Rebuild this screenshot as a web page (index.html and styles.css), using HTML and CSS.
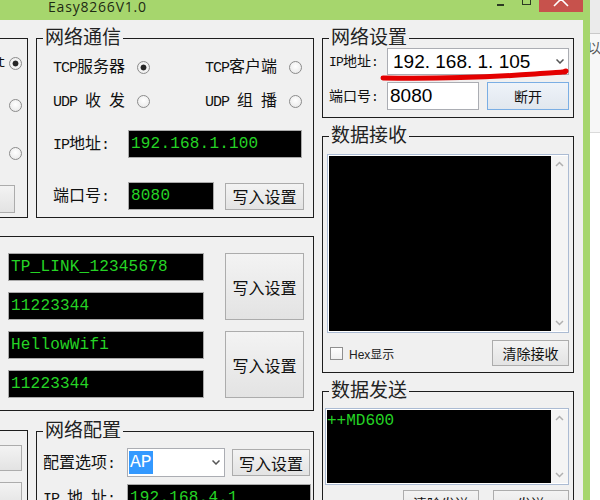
FILE: index.html
```html
<!DOCTYPE html>
<html lang="zh-CN">
<head>
<meta charset="utf-8">
<title>Easy8266V1.0</title>
<link rel="stylesheet" href="styles.css">
</head>
<body>
<div class="desktop">
  <div class="window">
    <div class="titlebar">
      <span class="title">Easy8266V1.0</span>
      <div class="caps">
        <span class="cap-min"></span>
        <span class="cap-max"></span>
        <span class="cap-close"><svg width="44" height="12" viewBox="0 0 44 12"><path d="M15 -8 L29 6 M29 -8 L15 6" stroke="#fff" stroke-width="1.6" fill="none"/></svg></span>
      </div>
    </div>
    <div class="client">
      <div class="col-left">
        <div class="row row1">
          <div class="partial p1">
            <div class="p-opt o1"><span class="en">Smart</span><input type="radio" class="radio" name="m" checked></div>
            <div class="p-opt o2"><input type="radio" class="radio" name="m"></div>
            <div class="p-opt o3"><input type="radio" class="radio" name="m"></div>
            <button class="btn p1btn"></button>
          </div>
          <fieldset class="group net-comm">
            <legend>网络通信</legend>
            <div class="gbody">
              <div class="radios">
                <label class="ropt"><span><span class="en">TCP</span>服务器</span><input type="radio" class="radio" name="p" checked></label>
                <label class="ropt"><span><span class="en">TCP</span>客户端</span><input type="radio" class="radio" name="p"></label>
                <label class="ropt"><span><span class="en">UDP </span>收<span class="en"> </span>发</span><input type="radio" class="radio" name="p"></label>
                <label class="ropt"><span><span class="en">UDP </span>组<span class="en"> </span>播</span><input type="radio" class="radio" name="p"></label>
              </div>
              <div class="frow ip-row"><span class="lbl"><span class="en">IP</span>地址<span class="en">:</span></span><div class="lcd ip-lcd">192.168.1.100</div></div>
              <div class="frow port-row"><span class="lbl">端口号<span class="en">:</span></span><div class="lcd port-lcd">8080</div><button class="btn wbtn">写入设置</button></div>
            </div>
          </fieldset>
        </div>

        <div class="wifi">
          <div class="lcd">TP_LINK_12345678</div>
          <button class="btn tall">写入设置</button>
          <div class="lcd">11223344</div>
          <div class="lcd">HellowWifi</div>
          <button class="btn tall">写入设置</button>
          <div class="lcd">11223344</div>
        </div>

        <div class="row row3">
          <div class="partial p3">
            <button class="btn pbtn"></button>
            <button class="btn pbtn"></button>
          </div>
          <fieldset class="group net-cfg">
            <legend>网络配置</legend>
            <div class="gbody">
              <div class="frow"><span class="lbl2">配置选项<span class="en">:</span></span><div class="select"><span class="sel-hl">AP</span><svg width="8" height="5" viewBox="0 0 8 5"><polyline points="0.5,0.5 4,4 7.5,0.5" fill="none" stroke="#555" stroke-width="1.5"/></svg></div><button class="btn wbtn2">写入设置</button></div>
              <div class="frow cfg-ip"><span class="lbl2"><span class="en">IP </span>地<span class="en"> </span>址<span class="en">:</span></span><div class="lcd cfg-lcd">192.168.4.1</div></div>
            </div>
          </fieldset>
        </div>
      </div>

      <div class="col-right">
        <fieldset class="group netset">
          <legend>网络设置</legend>
          <div class="gbody ns-body">
            <div class="nrow"><span class="lbl3"><span class="en3">IP</span>地址<span class="en3">:</span></span><div class="combo"><span>192. 168. 1. 105</span><svg width="8" height="5" viewBox="0 0 8 5"><polyline points="0.5,0.5 4,4 7.5,0.5" fill="none" stroke="#555" stroke-width="1.5"/></svg></div></div>
            <div class="nrow r2"><span class="lbl3">端口号<span class="en3">:</span></span><div class="tbox">8080</div><button class="btn btn14 focus">断开</button></div>
          </div>
        </fieldset>

        <fieldset class="group recv">
          <legend>数据接收</legend>
          <div class="gbody rv-body">
            <div class="ta rv-ta">
              <div class="ta-black"></div>
              <div class="ta-scroll">
                <svg width="17" height="17" viewBox="0 0 17 17"><polyline points="5,10 8.5,6.5 12,10" fill="none" stroke="#b0b0b0" stroke-width="1.5"/></svg>
                <svg width="17" height="17" viewBox="0 0 17 17"><polyline points="5,7 8.5,10.5 12,7" fill="none" stroke="#b0b0b0" stroke-width="1.5"/></svg>
              </div>
            </div>
            <div class="rv-bottom">
              <label class="chk"><input type="checkbox" class="cbox"><span class="hex">Hex显示</span></label>
              <button class="btn btn14 clr">清除接收</button>
            </div>
          </div>
        </fieldset>

        <fieldset class="group send">
          <legend>数据发送</legend>
          <div class="gbody sd-body">
            <div class="ta sd-ta">
              <div class="ta-black"><span class="sendtxt">++MD600</span></div>
              <div class="ta-scroll">
                <svg width="17" height="17" viewBox="0 0 17 17"><polyline points="5,10 8.5,6.5 12,10" fill="none" stroke="#b0b0b0" stroke-width="1.5"/></svg>
                <svg width="17" height="17" viewBox="0 0 17 17"><polyline points="5,7 8.5,10.5 12,7" fill="none" stroke="#b0b0b0" stroke-width="1.5"/></svg>
              </div>
            </div>
            <div class="sd-bottom">
              <button class="btn btn14 sb">清除发送</button>
              <button class="btn btn14 sb">发送</button>
            </div>
          </div>
        </fieldset>
      </div>
    </div>
  </div>
  <div class="bgwin"><span class="bgtxt">以</span></div>
  <svg class="redmark" width="600" height="500" viewBox="0 0 600 500"><path d="M383 78 C 430 79, 490 77, 535 74 S 560 72, 566 71" fill="none" stroke="#e40000" stroke-width="5" stroke-linecap="round"/></svg>
</div>
</body>
</html>
```

FILE: styles.css
```css
* { box-sizing: border-box; }
html, body { margin: 0; padding: 0; }
body {
  width: 600px;
  height: 500px;
  overflow: hidden;
  position: relative;
  background: #fff;
  font-family: "Noto Sans CJK SC", "Noto Sans", sans-serif;
  color: #111;
}
.desktop { display: flex; height: 500px; }

.window {
  width: 590px;
  flex: none;
  display: flex;
  flex-direction: column;
  background: #a6d66d;
}
.titlebar {
  height: 20px;
  flex: none;
  display: flex;
  align-items: flex-start;
  overflow: hidden;
}
.title {
  margin: -3px 0 0 48px;
  font-family: "Open Sans", sans-serif;
  font-size: 14px;
  line-height: 19px;
  letter-spacing: 0.8px;
  color: #1e2a14;
}
.caps { margin: 0 7px 0 auto; display: flex; align-items: flex-start; }
.cap-min { width: 7px; height: 2px; margin-top: 4px; background: #2c3a22; }
.cap-max { width: 9px; height: 9px; margin: -4px 0 0 18px; border: 1px solid #2c3a22; }
.cap-close { width: 44px; height: 12px; margin-left: 8px; background: #c7524c; display: block; }
.cap-close svg { display: block; }

.client {
  flex: 1;
  margin-right: 7px;
  background: #f0f0f0;
  display: flex;
  align-items: flex-start;
  gap: 8px;
  padding-top: 6px;
  overflow: hidden;
}

/* generic */
.en { font-family: "Liberation Mono", monospace; font-size: 15px; letter-spacing: -1px; }
.en3 { font-family: "Liberation Mono", monospace; font-size: 13px; letter-spacing: -0.8px; }
.group {
  margin: 0;
  padding: 0;
  min-width: 0;
  flex: none;
  border: 1px solid #1d1d1d;
}
.group > legend {
  margin-left: 6px;
  padding: 0 2px 6px;
  font-size: 19px;
  line-height: 19px;
  color: #222;
}
.gbody { display: flex; flex-direction: column; }
.btn {
  font-family: "Noto Sans CJK SC", sans-serif;
  font-size: 16px;
  line-height: 1;
  color: #111;
  padding: 0;
  border: 1px solid #acacac;
  background: linear-gradient(#f3f3f3, #e3e3e3);
  flex: none;
}
.btn14 { font-size: 14px; }
.radio {
  appearance: none;
  -webkit-appearance: none;
  margin: 0;
  width: 13px;
  height: 13px;
  flex: none;
  border-radius: 50%;
  border: 1px solid #8b8b8b;
  background: radial-gradient(circle at 50% 40%, #fff 0, #e9e9e9 85%);
}
.radio:checked {
  background: radial-gradient(circle, #262626 0 2.6px, #f6f6f6 3.3px, #e4e4e4 100%);
}
.lcd {
  height: 28px;
  flex: none;
  background: #000;
  border: 1px solid #a9a9a9;
  color: #25d425;
  font-family: "Liberation Mono", monospace;
  font-size: 16px;
  line-height: 26px;
  padding-left: 2px;
  letter-spacing: 0.2px;
  white-space: nowrap;
  overflow: hidden;
}

/* left column */
.col-left { width: 314px; flex: none; display: flex; flex-direction: column; }
.col-left > * { flex: none; }
.row { display: flex; gap: 8px; align-items: flex-start; }
.partial {
  width: 28px;
  flex: none;
  border: 1px solid #1d1d1d;
  border-left: none;
}
.p1 { margin-top: 12px; height: 180px; display: flex; flex-direction: column; }
.p-opt {
  display: flex;
  justify-content: flex-end;
  align-items: center;
  gap: 4px;
  height: 13px;
  padding-right: 5px;
  white-space: nowrap;
  font-size: 16px;
}
.o1 { margin-top: 18px; }
.o2 { margin-top: 29px; }
.o3 { margin-top: 35px; }
.p1btn { width: 15px; height: 28px; margin-top: 25px; border-left: none; }

.net-comm { width: 278px; }
.net-comm .gbody { padding: 6px 0 7px 16px; }
.radios { display: grid; grid-template-columns: 152px 1fr; row-gap: 14px; }
.ropt {
  display: flex;
  align-items: center;
  gap: 12px;
  height: 20px;
  font-size: 16px;
  line-height: 20px;
  white-space: nowrap;
}
.frow { display: flex; align-items: center; }
.lbl { width: 75px; flex: none; font-size: 16px; line-height: 20px; white-space: nowrap; }
.ip-row { margin-top: 19px; }
.port-row { margin-top: 24px; }
.ip-lcd { width: 174px; }
.port-lcd { width: 86px; }
.wbtn { width: 79px; height: 27px; margin-left: 11px; }

.wifi {
  margin-top: 18px;
  height: 175px;
  border: 1px solid #1d1d1d;
  border-left: none;
  display: grid;
  grid-template-columns: 196px 79px;
  grid-template-rows: repeat(4, 28px);
  column-gap: 21px;
  row-gap: 11px;
  padding: 16px 0 0 8px;
  align-content: start;
}
.tall { grid-row: span 2; height: auto; }

.row3 { margin-top: 8px; }
.p3 { margin-top: 11px; height: 100px; display: flex; flex-direction: column; }
.pbtn { width: 22px; height: 26px; border-left: none; margin-top: 14px; }
.pbtn + .pbtn { margin-top: 11px; }
.net-cfg { width: 278px; }
.net-cfg .gbody { padding: 4px 0 0 6px; }
.lbl2 { width: 84px; flex: none; font-size: 16px; line-height: 20px; white-space: nowrap; }
.select {
  width: 98px;
  height: 29px;
  flex: none;
  display: flex;
  align-items: center;
  background: #fff;
  border: 1px solid #abadb3;
  padding: 0 4px 0 1px;
}
.sel-hl {
  background: #3399ff;
  color: #fff;
  font-family: "Liberation Mono", monospace;
  font-size: 18px;
  line-height: 23px;
  padding: 0 1px;
}
.select svg { margin-left: auto; }
.wbtn2 { width: 78px; height: 27px; margin-left: 7px; }
.cfg-ip { margin-top: 7px; }
.cfg-lcd { width: 184px; }

/* right column */
.col-right { width: 252px; flex: none; display: flex; flex-direction: column; }
.ns-body { margin-top: -3px; padding: 0 0 7px 6px; }
.nrow { display: flex; align-items: center; }
.nrow.r2 { margin-top: 7px; }
.lbl3 { width: 58px; flex: none; font-size: 14px; line-height: 18px; white-space: nowrap; }
.combo {
  width: 182px;
  height: 27px;
  display: flex;
  align-items: center;
  background: #fff;
  border: 1px solid #abadb3;
  padding: 0 4px 0 5px;
  font-family: "Liberation Sans", sans-serif;
  font-size: 19px;
  color: #000;
  white-space: nowrap;
}
.combo svg { margin-left: auto; }
.tbox {
  width: 92px;
  height: 28px;
  background: #fff;
  border: 1px solid #abadb3;
  padding-left: 2px;
  font-family: "Liberation Sans", sans-serif;
  font-size: 19px;
  line-height: 26px;
  color: #000;
}
.focus {
  width: 82px;
  height: 28px;
  margin-left: 8px;
  border-color: #7aaee4;
  background: linear-gradient(#eef3f9, #e1e7ee);
}

.recv { margin-top: 6px; }
.rv-body { padding: 5px 4px 6px; }
.ta {
  display: flex;
  border: 1px solid #abbbd3;
  background: #fff;
  padding: 1px 0 1px 1px;
}
.rv-ta { height: 179px; }
.ta-black { flex: 1; background: #000; }
.ta-scroll {
  width: 17px;
  flex: none;
  background: #f4f4f4;
  display: flex;
  flex-direction: column;
  justify-content: space-between;
}
.ta-scroll svg { display: block; }
.rv-bottom {
  margin-top: 7px;
  height: 26px;
  display: flex;
  align-items: center;
  justify-content: space-between;
  padding-left: 3px;
}
.chk { display: flex; align-items: center; gap: 6px; }
.cbox {
  appearance: none;
  -webkit-appearance: none;
  margin: 0;
  width: 13px;
  height: 13px;
  border: 1px solid #8f8f8f;
  background: linear-gradient(#fefefe, #f0f0f0);
}
.hex { font-family: "Liberation Sans", "Noto Sans CJK SC", sans-serif; font-size: 12px; color: #222; }
.clr { width: 77px; height: 26px; }

.send { margin-top: 6px; }
.sd-body { padding: 4px 4px 0 2px; }
.sd-ta { height: 77px; }
.sendtxt {
  display: block;
  padding-top: 1px;
  color: #25d425;
  font-family: "Liberation Mono", monospace;
  font-size: 16px;
  line-height: 20px;
}
.sd-bottom { margin-top: 5px; display: flex; justify-content: flex-end; gap: 14px; }
.sb { width: 76px; height: 26px; }

.bgwin {
  flex: 1;
  overflow: hidden;
  background: linear-gradient(#ebebeb 0 33px, #c9c9c9 33px 34px, #f7f7f7 34px 132px, #dadada 132px 133px, #fff 133px);
}
.bgtxt { display: block; margin: 38px 0 0 -3px; font-size: 14px; line-height: 18px; color: #555; }

.redmark { position: absolute; left: 0; top: 0; pointer-events: none; }
```
